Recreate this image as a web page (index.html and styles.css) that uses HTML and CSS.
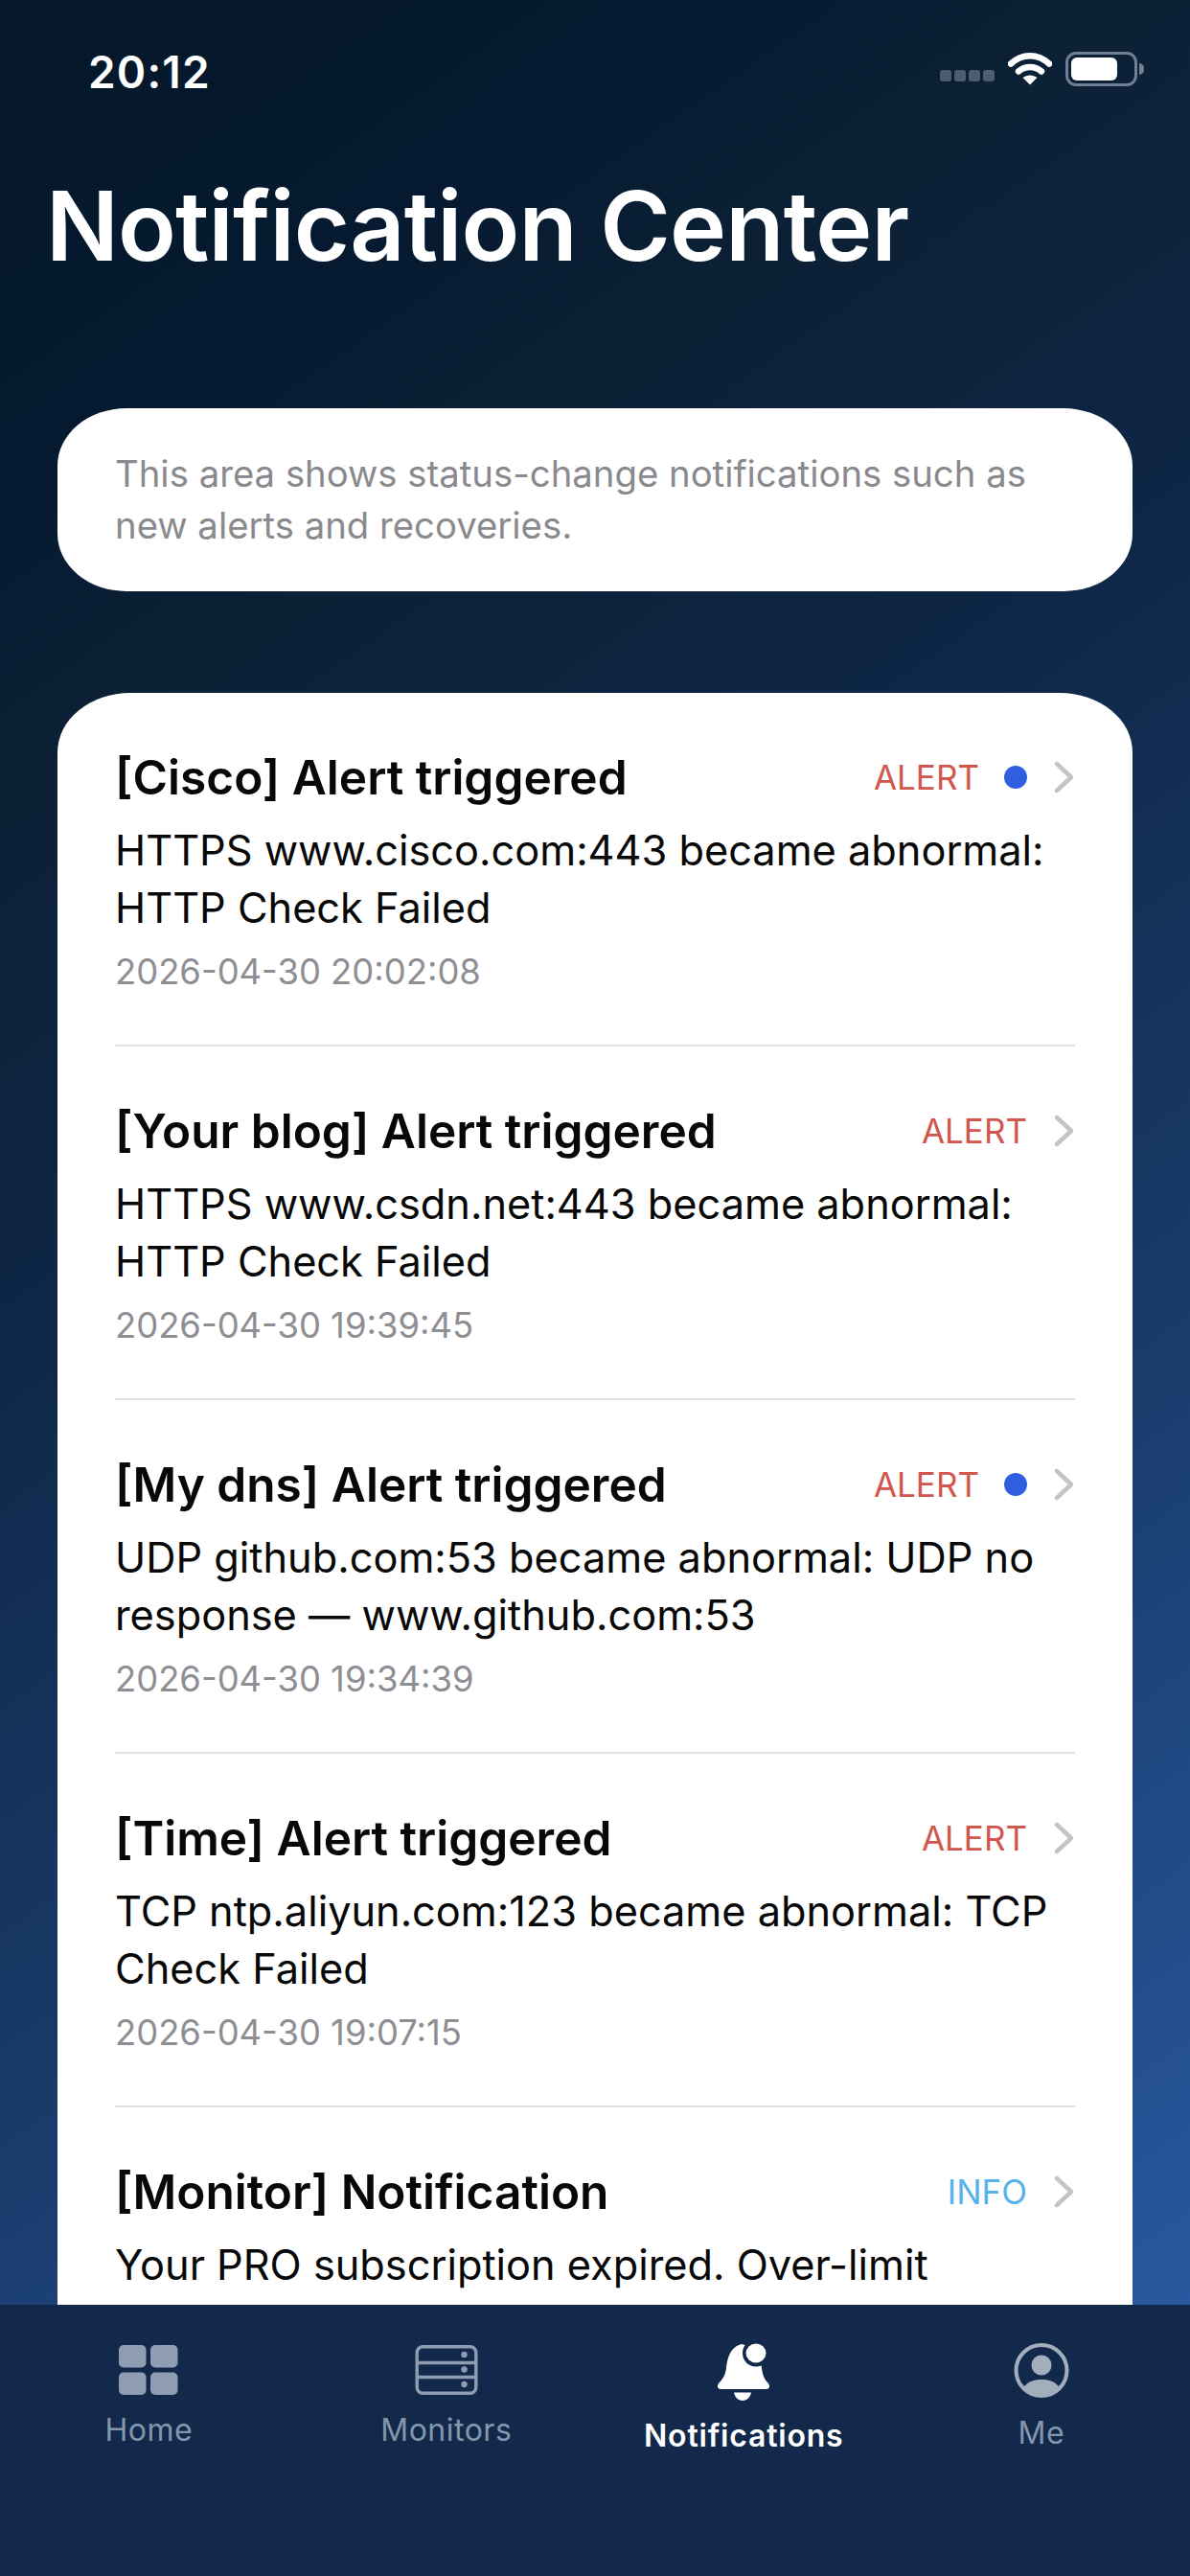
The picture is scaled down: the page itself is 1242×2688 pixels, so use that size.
FILE: index.html
```html
<!DOCTYPE html>
<html>

<head>
    <meta charset="utf-8">
    <title>Notification Center</title>
    <link rel="stylesheet" href="styles.css">
</head>

<body>
    <div class="screen">
        <div class="status-bar">
            <span class="clock">20:12</span>
            <div class="status-icons">
                <div class="signal"><i></i><i></i><i></i><i></i></div>
                <svg class="wifi" width="46" height="34" viewBox="0 0 46 34">
                    <path d="M3 11.5C15 0.5 31 0.5 43 11.5" fill="none" stroke="#fff" stroke-width="6.5" stroke-linecap="round"/>
                    <path d="M11 19.5C18 13.5 28 13.5 35 19.5" fill="none" stroke="#fff" stroke-width="6.5" stroke-linecap="round"/>
                    <path d="M23 33.5L15.5 26C20 22.5 26 22.5 30.5 26Z" fill="#fff"/>
                </svg>
                <div class="battery"><div class="battery-level"></div></div>
                <div class="battery-cap"></div>
            </div>
        </div>

        <h1 class="page-title">Notification Center</h1>

        <div class="content">
            <div class="info-card">This area shows status-change notifications such as new alerts and recoveries.</div>

            <div class="list-card">
                <div class="item">
                    <div class="item-head">
                        <span class="item-title">[Cisco] Alert triggered</span>
                        <span class="level alert">ALERT</span>
                        <span class="unread"></span>
                        <svg class="chevron" width="22" height="34" viewBox="0 0 22 34"><path d="M3 3L18 17L3 31" fill="none" stroke="#c4c4c6" stroke-width="4.5" stroke-linecap="round" stroke-linejoin="round"/></svg>
                    </div>
                    <div class="item-body">HTTPS www.cisco.com:443 became abnormal: HTTP Check Failed</div>
                    <div class="item-time">2026-04-30 20:02:08</div>
                </div>
                <div class="item">
                    <div class="item-head">
                        <span class="item-title">[Your blog] Alert triggered</span>
                        <span class="level alert">ALERT</span>
                        <svg class="chevron" width="22" height="34" viewBox="0 0 22 34"><path d="M3 3L18 17L3 31" fill="none" stroke="#c4c4c6" stroke-width="4.5" stroke-linecap="round" stroke-linejoin="round"/></svg>
                    </div>
                    <div class="item-body">HTTPS www.csdn.net:443 became abnormal: HTTP Check Failed</div>
                    <div class="item-time">2026-04-30 19:39:45</div>
                </div>
                <div class="item">
                    <div class="item-head">
                        <span class="item-title">[My dns] Alert triggered</span>
                        <span class="level alert">ALERT</span>
                        <span class="unread"></span>
                        <svg class="chevron" width="22" height="34" viewBox="0 0 22 34"><path d="M3 3L18 17L3 31" fill="none" stroke="#c4c4c6" stroke-width="4.5" stroke-linecap="round" stroke-linejoin="round"/></svg>
                    </div>
                    <div class="item-body">UDP github.com:53 became abnormal: UDP no response — www.github.com:53</div>
                    <div class="item-time">2026-04-30 19:34:39</div>
                </div>
                <div class="item">
                    <div class="item-head">
                        <span class="item-title">[Time] Alert triggered</span>
                        <span class="level alert">ALERT</span>
                        <svg class="chevron" width="22" height="34" viewBox="0 0 22 34"><path d="M3 3L18 17L3 31" fill="none" stroke="#c4c4c6" stroke-width="4.5" stroke-linecap="round" stroke-linejoin="round"/></svg>
                    </div>
                    <div class="item-body">TCP ntp.aliyun.com:123 became abnormal: TCP Check Failed</div>
                    <div class="item-time">2026-04-30 19:07:15</div>
                </div>
                <div class="item">
                    <div class="item-head">
                        <span class="item-title">[Monitor] Notification</span>
                        <span class="level info">INFO</span>
                        <svg class="chevron" width="22" height="34" viewBox="0 0 22 34"><path d="M3 3L18 17L3 31" fill="none" stroke="#c4c4c6" stroke-width="4.5" stroke-linecap="round" stroke-linejoin="round"/></svg>
                    </div>
                    <div class="item-body">Your PRO subscription expired. Over-limit</div>
                </div>
            </div>
        </div>

        <div class="tab-bar">
            <div class="tab">
                <svg class="tab-icon" width="64" height="54" viewBox="0 0 64 54" fill="#8e9db1">
                    <rect x="1" y="2" width="28.5" height="23.5" rx="5"/>
                    <rect x="34" y="2" width="28.5" height="23.5" rx="5"/>
                    <rect x="1" y="30.5" width="28.5" height="23.5" rx="5"/>
                    <rect x="34" y="30.5" width="28.5" height="23.5" rx="5"/>
                </svg>
                <span class="tab-label">Home</span>
            </div>
            <div class="tab">
                <svg class="tab-icon" width="66" height="54" viewBox="0 0 66 54" fill="none" stroke="#8e9db1" stroke-width="3.4">
                    <rect x="2.2" y="3.7" width="61.6" height="48.6" rx="6"/>
                    <path d="M2 20.5H64M2 35.5H64"/>
                    <circle cx="51.5" cy="12" r="3.2" fill="#8e9db1" stroke="none"/>
                    <circle cx="51.5" cy="27.5" r="3.2" fill="#8e9db1" stroke="none"/>
                    <circle cx="51.5" cy="43" r="3.2" fill="#8e9db1" stroke="none"/>
                </svg>
                <span class="tab-label">Monitors</span>
            </div>
            <div class="tab active">
                <svg class="tab-icon" width="56" height="60" viewBox="0 0 56 60" fill="#fff">
                    <path d="M26 1C14 4 11 16 10 26C9 34 6 38 2 42C0 45 1 48 4 48H52C55 48 56 45 54 42C50 38 48 34 47 26C46 12 38 4 26 1Z"/>
                    <circle cx="41" cy="10.5" r="14" fill="#13294b"/>
                    <ellipse cx="41" cy="10.5" rx="10.5" ry="10"/>
                    <path d="M18 51.5H36C35 56 32 60 27 60C22 60 19 56 18 51.5Z"/>
                </svg>
                <span class="tab-label">Notifications</span>
            </div>
            <div class="tab">
                <svg class="tab-icon" width="58" height="57" viewBox="0 0 58 57" fill="#a3aebd">
                    <circle cx="29" cy="28.5" r="26.5" fill="none" stroke="#a3aebd" stroke-width="4"/>
                    <circle cx="29" cy="23" r="10.5"/>
                    <path d="M10 47C14 40 21 38 29 38C37 38 44 40 48 47C43 52 36 55 29 55C22 55 15 52 10 47Z"/>
                </svg>
                <span class="tab-label">Me</span>
            </div>
        </div>
    </div>
</body>

</html>
```

FILE: styles.css
```css
body {
    margin: 0;
    font-family: Inter, "Liberation Sans", sans-serif;
}

.screen {
    width: 1242px;
    height: 2688px;
    display: flex;
    flex-direction: column;
    overflow: hidden;
    background: linear-gradient(145deg, #05172a 0%, #051a30 14%, #0c2036 24%, #0e2645 38%, #1a3d6e 65%, #28589f 92%, #2a5ca8 100%);
}

.status-bar {
    height: 150px;
    display: flex;
    justify-content: space-between;
    align-items: flex-start;
    padding: 52px 48px 0 92px;
    box-sizing: border-box;
}

.clock {
    color: #fff;
    font-size: 46px;
    font-weight: 600;
    line-height: 46px;
    letter-spacing: 1.2px;
}

.status-icons {
    display: flex;
    align-items: center;
    padding-top: 2px;
}

.signal {
    display: flex;
    gap: 3px;
    margin: 14px 14px 0 0;
}

.signal i {
    width: 12px;
    height: 12px;
    border-radius: 3px;
    background-color: #4b5d73;
}

.wifi {
    margin-right: 14px;
}

.battery {
    width: 75px;
    height: 36px;
    box-sizing: border-box;
    border: 3px solid #6f8095;
    border-radius: 11px;
    padding: 3px;
}

.battery-level {
    width: 48px;
    height: 24px;
    border-radius: 6px;
    background-color: #fff;
}

.battery-cap {
    width: 5px;
    height: 12px;
    margin-left: 2px;
    border-radius: 0 6px 6px 0;
    background-color: #6f8095;
}

.page-title {
    margin: 0;
    padding-left: 48px;
    height: 276px;
    color: #fff;
    font-size: 100px;
    font-weight: 600;
    line-height: 172px;
    letter-spacing: -0.85px;
}

.content {
    flex: 1;
    min-height: 0;
    overflow: hidden;
    padding: 0 60px;
}

.info-card {
    height: 191px;
    box-sizing: border-box;
    margin-bottom: 106px;
    padding: 41px 60px 0;
    background-color: #fff;
    border-radius: 72px / 60px;
    color: #8a8a8e;
    font-size: 38.3px;
    line-height: 54px;
}

.list-card {
    background-color: #fff;
    border-radius: 76px 76px 0 0 / 62px 62px 0 0;
    padding: 0 60px;
}

.item {
    height: 369px;
    box-sizing: border-box;
    padding-top: 61px;
    border-bottom: 2px solid #e2e2e4;
}

.item-head {
    display: flex;
    align-items: center;
    height: 54px;
    margin-bottom: 19px;
}

.item-title {
    flex: 1;
    color: #080808;
    font-size: 49.6px;
    font-weight: 600;
}

.level {
    font-size: 35px;
}

.level.alert {
    color: #d2564e;
}

.level.info {
    color: #57b2ea;
}

.unread {
    width: 24px;
    height: 24px;
    margin-left: 26px;
    border-radius: 50%;
    background-color: #2f5fe0;
}

.chevron {
    margin-left: 28px;
}

.item-body {
    color: #080808;
    font-size: 43.3px;
    line-height: 60px;
}

.item-time {
    margin-top: 14px;
    color: #8e8e93;
    font-size: 36.4px;
    line-height: 46px;
}

.tab-bar {
    height: 283px;
    flex-shrink: 0;
    display: grid;
    grid-template-columns: repeat(4, 1fr);
    padding: 40px 0 0;
    box-sizing: border-box;
    background-color: #13294b;
}

.tab {
    display: flex;
    flex-direction: column;
    align-items: center;
}

.tab-icon {
    flex-shrink: 0;
}

.tab-icon + .tab-label {
    margin-top: 17px;
}

.tab-label {
    color: #8496ab;
    font-size: 32px;
    letter-spacing: 0.5px;
}

.tab.active .tab-label {
    color: #fff;
    font-weight: 600;
    letter-spacing: 0.8px;
}
```
